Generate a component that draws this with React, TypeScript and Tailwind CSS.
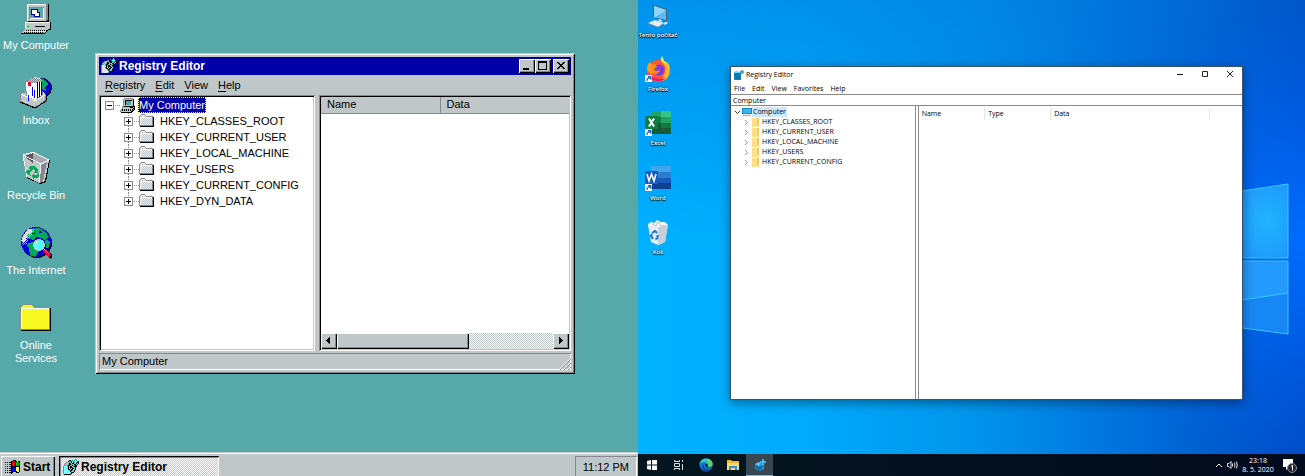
import type { ReactNode } from 'react'

const RAISED = 'bg-[#c0c7c8] shadow-[inset_1px_1px_#fff,inset_-1px_-1px_#000,inset_-2px_-2px_#87888f]'
const SUNKEN = 'bg-white p-0.5 shadow-[inset_1px_1px_#87888f,inset_-1px_-1px_#fff,inset_2px_2px_#000,inset_-2px_-2px_#c0c7c8]'
const CHECKER = 'bg-[repeating-conic-gradient(#fff_0_25%,#c0c7c8_0_50%)] bg-[length:2px_2px]'

const PALETTE: Record<string, string> = {
  k: '#000000', w: '#ffffff', g: '#c0c7c8', d: '#87888f', c: '#57ffff', t: '#00a8a8',
  y: '#ffff57', r: '#ff0000', b: '#0000ff', n: '#00c000', s: '#57a8a8',
}

// Small icons are kept as character maps, one letter per pixel
function Sprite({ rows }: { rows: string[] }) {
  return (
    <svg width="16" height="16" viewBox="0 0 16 16" shapeRendering="crispEdges" className="shrink-0" aria-hidden="true">
      {rows.flatMap((row, y) =>
        [...row].map((p, x) => (PALETTE[p] ? <rect key={`${x}-${y}`} x={x} y={y} width="1" height="1" fill={PALETTE[p]} /> : null))
      )}
    </svg>
  )
}

const REGEDIT = [
  '............t...',
  '......kk.t.tct..',
  '.....kddk.tccctk',
  '...ddgsck.ktcskk',
  '..dgcskkckkcskck',
  '.dcscskkssckkck.',
  '.dscskkscktskk..',
  'dcwcskckkcskkk..',
  'dwcwckskkkcsk...',
  'dcwcskckckkck...',
  'dwcwckkckkcsk...',
  'dcwcwcskksck....',
  'dwcwcwckscsk....',
  'dcwcwcwckkk.....',
  'dwcwcwcsk.......',
  '.kkkkkkk........',
]

const FOLDER = [
  '................',
  '..dddd..........',
  '.dwwwwd.........',
  'dgygygyddddddd..',
  'dwwwwwwwwwwwwdk.',
  'dwygygygygygydk.',
  'dwgygygygygygdk.',
  'dwygygygygygydk.',
  'dwgygygygygygdk.',
  'dwygygygygygydk.',
  'dwgygygygygygdk.',
  'dwygygygygygydk.',
  'ddddddddddddddk.',
  '.kkkkkkkkkkkkkk.',
  '................',
  '................',
]

const COMPUTER = [
  '................',
  '....ddddddddd...',
  '...dgggggggggk..',
  '...dgkkkkkkkgk..',
  '...dgksssssggk..',
  '...dgksssssggk..',
  '...dgksssssggk..',
  '...dgksssssggk..',
  '...dgggggggggk..',
  '..ddkkkkkkkkkkk.',
  '..dgggggggkkkgk.',
  '..dggggggggggkk.',
  '.dkgkgkgkgkgkdk.',
  'dgkgkgkgkgkgkk..',
  'dggggggggggkk...',
  '.kkkkkkkkkkk....',
]

const FLAG = [
  '................',
  '........kkk.....',
  '......kkrrkk.kk.',
  'k.k.kkkrrrknnnk.',
  '......krrrknnnk.',
  'r.r.rkkrrrknnnk.',
  '......krrkknnnk.',
  'r.k.rkkkkkkkkkk.',
  '......kbbkkyyyk.',
  'b.b.bkkbbbkyyyk.',
  '......kbbbkyyyk.',
  'b.k.bkkbbbkyyyk.',
  '......kbkkkkyyk.',
  'k.k.kkkk...kkk..',
  '......k.........',
  '................',
]

function Pixel32({ children }: { children: ReactNode }) {
  return (
    <svg width="32" height="32" viewBox="0 0 32 32" shapeRendering="crispEdges" aria-hidden="true">
      <defs>
        <pattern id="dither" width="2" height="2" patternUnits="userSpaceOnUse">
          <path d="M0 0h1v1H0zM1 1h1v1H1z" fill="#c0c7c8" />
        </pattern>
      </defs>
      {children}
    </svg>
  )
}

const MyComputerIcon = () => (
  <Pixel32>
    <path d="M8 1h19l2 2v16l-2 2H8z" fill="#000" />
    <path d="M7 2l2-1h19v17l-2 1H7z" fill="#87888f" />
    <path d="M7 2h19v17H7z" fill="#c0c7c8" />
    <path d="M7 2h19v1H7zM7 2h1v17H7z" fill="#fff" />
    <path d="M9 5h15v12H9z" fill="#87888f" />
    <path d="M10 6h14v11H10z" fill="#fff" />
    <path d="M10 6h13v10H10z" fill="#57a8a8" />
    <path d="M11 7h7v6h-7zM14 10h6v5h-6z" fill="#0000a8" />
    <path d="M12 8h5v4h-5zM15 11h4v3h-4z" fill="#fff" />
    <path d="M5 20h26v8H5z" fill="#000" />
    <path d="M5 20h25v7H5z" fill="#c0c7c8" />
    <path d="M5 20h25v1H5zM5 20h1v7H5z" fill="#fff" />
    <path d="M7 24h2v1H7z" fill="#00c000" />
    <path d="M15 24h10v1H15z" fill="#000" />
    <path d="M5 27h24l-4 5H1v-1z" fill="#000" />
    <path d="M5 27h23l-4 4H1z" fill="#c0c7c8" />
    <path d="M6 28.500h21M4 30.500h20" stroke="#000" strokeDasharray="1 1" />
    <path d="M5 29.500h21" stroke="#fff" strokeDasharray="1 1" />
  </Pixel32>
)

const InboxIcon = () => (
  <Pixel32>
    <circle cx="22" cy="11" r="10" fill="#000" />
    <circle cx="21" cy="11" r="10" fill="#0000d0" />
    <path d="M18 1l6 1 4 5-3 3 1 4-5-3-3-5z" fill="#00a857" />
    <path d="M6 5l8-5 6 1v22H7z" fill="#fff" />
    <path d="M7 4l7-4 8 3v3l-7 0-9-1z" fill="#87888f" />
    <path d="M7 4l7-4 8 3v3l-7 0-9-1z" fill="url(#dither)" />
    <path d="M17 5h1v17h-1zM19 5h1v16h-1zM21 5h1v16h-1z" fill="#000" />
    <path d="M18 5h1v17h-1zM20 5h1v16h-1z" fill="#fff" />
    <path d="M8 5h3v4H8z" fill="#e00020" />
    <path d="M12 10h1v9h-1zM14 13h1v8h-1z" fill="#0000ff" />
    <path d="M0 16l6-3v6l9 4 7-5v-4l4 3v8l-11 7L0 25z" fill="#87888f" />
    <path d="M1 17l5-2v5l9 4 8-6v-3l2 2v6l-10 7L1 24z" fill="#c0c7c8" />
    <path d="M1 17l14 7 10-6" stroke="#fff" fill="none" />
    <path d="M0 25l15 6 11-7v-6" stroke="#000" fill="none" />
    <path d="M8 18h1v6H8z" fill="#0000ff" />
  </Pixel32>
)

const RecycleIcon = () => (
  <Pixel32>
    <path d="M3 3l10-3 17 8-4 22-6 2-13-6z" fill="#000" />
    <path d="M3 3l10-3 16 8-4 21-6 2-12-6z" fill="#c0c7c8" />
    <path d="M4 4l9-3v10z" fill="#57585f" />
    <path d="M13 1l15 7-8 4-7-3z" fill="#a8acb0" />
    <path d="M3 3l18 9 8-4M3 3l10-3 16 8M3 3l4 22" stroke="#fff" fill="none" />
    <path d="M21 12l-2 18" stroke="#e8ecec" fill="none" />
    <path d="M27 10l-4 19-3 2 1-18z" fill="#87888f" />
    <path d="M10 14l4 0 3 3 1-1v5h-5l2-2-2-2-2 2-2-2zM7 18l4 0-1 4 1 2-3-1-2-3zM12 24l2-3v2h3l2-3 0 4-2 2h-3v2z" fill="#00a857" />
  </Pixel32>
)

const InternetIcon = () => (
  <Pixel32>
    <circle cx="17" cy="16" r="15" fill="#000" />
    <circle cx="16" cy="15" r="15" fill="#0000d8" />
    <path d="M5 6l6-4 8-1 7 4 3 5-4 3-4-2-5-1-3 3-5-2-4 1z" fill="#00a857" />
    <path d="M8 16l5-1 4 3 2 6-4 6-5-2-1-7-3-3z" fill="#00a857" />
    <path d="M25 13l5 1-1 6-3 1z" fill="#00a857" />
    <path d="M3 9l5-7 5 0-2 4-4 2-1 6-3 2-2-2z" fill="#fff" />
    <path d="M3 9l5-7 7-1-2 6-5 5-1 5-4 1-2-4z" fill="url(#dither)" />
    <path d="M12 6h4v1h-4zM19 4h3v2h-3z" fill="#0000d8" />
    <circle cx="19" cy="18" r="6" fill="#c0c7c8" />
    <circle cx="19" cy="18" r="5" fill="#57ffff" />
    <circle cx="19" cy="18" r="5" fill="url(#dither)" />
    <path d="M16 15h2v1h-2zM15 17h1v3h-1z" fill="#fff" />
    <path d="M23 22l2-1 7 7v3l-2 1-7-7z" fill="#000" />
    <path d="M24 23l6 6" stroke="#e00040" strokeWidth="3" />
    <path d="M24 22l5 5" stroke="#ffa8c0" />
  </Pixel32>
)

const OnlineIcon = () => (
  <Pixel32>
    <path d="M0 6l3-4h9l3 4h15v22H0z" fill="#87888f" />
    <path d="M30 6h1v23H1v-1h29z" fill="#000" />
    <path d="M1 6l2-3h9l3 4h14v20H1z" fill="#ffff00" />
    <path d="M3 3h9l2 3H1zM2 7h27v20H2z" fill="url(#dither)" fillOpacity="0.15" />
    <path d="M1 6h28v1H1zM1 6h1v21H1z" fill="#fff" />
  </Pixel32>
)

const CLASSIC_ICONS = [
  { label: 'My Computer', Icon: MyComputerIcon },
  { label: 'Inbox', Icon: InboxIcon },
  { label: 'Recycle Bin', Icon: RecycleIcon },
  { label: 'The Internet', Icon: InternetIcon },
  { label: 'Online Services', Icon: OnlineIcon },
]

const CLASSIC_KEYS = ['HKEY_CLASSES_ROOT', 'HKEY_CURRENT_USER', 'HKEY_LOCAL_MACHINE', 'HKEY_USERS', 'HKEY_CURRENT_CONFIG', 'HKEY_DYN_DATA']

function Expander({ open, last }: { open?: boolean; last?: boolean }) {
  return (
    <svg width="15" height="16" viewBox="0 0 15 16" shapeRendering="crispEdges" className="shrink-0" aria-hidden="true">
      <path d="M10 8.500h5" stroke="#87888f" strokeDasharray="1 1" />
      {!open && <path d="M4.500 0v4" stroke="#87888f" strokeDasharray="1 1" />}
      {!open && !last && <path d="M4.500 13v3" stroke="#87888f" strokeDasharray="1 1" />}
      <rect x="0.500" y="4.500" width="8" height="8" fill="#fff" stroke="#87888f" />
      <path d="M2 8h5v1H2z" />
      {!open && <path d="M4 6h1v5H4z" />}
    </svg>
  )
}

function CaptionButton({ label, d }: { label: string; d: string }) {
  return (
    <button aria-label={label} className={`h-3.5 w-4 ${RAISED}`}>
      <svg width="16" height="14" viewBox="0 0 16 14" shapeRendering="crispEdges"><path d={d} fillRule="evenodd" /></svg>
    </button>
  )
}

function ClassicWindow() {
  return (
    <div className="mt-[53px] mr-[63px] mb-[78px] ml-[23px] flex min-w-0 flex-1 flex-col bg-[#c0c7c8] p-1 shadow-[inset_1px_1px_#c0c7c8,inset_-1px_-1px_#000,inset_2px_2px_#fff,inset_-2px_-2px_#87888f]">
      <div className="flex h-[18px] items-center bg-[#0000a8] px-0.5 text-white">
        <Sprite rows={REGEDIT} />
        <h1 className="ml-0.5 flex-1 text-[12px] leading-4 font-bold">Registry Editor</h1>
        <CaptionButton label="Minimize" d="M4 9h6v2H4z" />
        <CaptionButton label="Maximize" d="M3 2h9v9H3zM4 4h7v6H4z" />
        <div className="ml-0.5 flex">
          <CaptionButton label="Close" d="M4 3h2v1h1v1h2V4h1V3h2v1h-1v1h-1v1H9v1h1v1h1v1h1v1h-2V9H9V8H7v1H6v1H4V9h1V8h1V7h1V6H6V5H5V4H4z" />
        </div>
      </div>
      <nav className="flex h-5 items-center gap-2.5 px-1.5">
        {['Registry', 'Edit', 'View', 'Help'].map((m) => (
          <button key={m}><u className="underline-offset-2">{m[0]}</u>{m.slice(1)}</button>
        ))}
      </nav>
      <div className="grid flex-1 grid-cols-[216fr_252fr] gap-1">
        <ul className={SUNKEN}>
          <li className="flex h-4 items-center pl-1">
            <Expander open />
            <Sprite rows={COMPUTER} />
            <button className="ml-0.5 h-4 bg-[#0000a8] px-px text-white outline-1 -outline-offset-1 outline-dotted outline-[#ffff57]">My Computer</button>
          </li>
          {CLASSIC_KEYS.map((key, i) => (
            <li key={key} className="flex h-4 items-center pl-[23px]">
              <Expander last={i === CLASSIC_KEYS.length - 1} />
              <Sprite rows={FOLDER} />
              <button className="ml-[5px]">{key}</button>
            </li>
          ))}
        </ul>
        <div className={`flex flex-col ${SUNKEN}`}>
          <table className="w-full table-fixed border-collapse bg-[#c0c7c8] text-left">
            <thead>
              <tr className="h-4 border-b border-[#87888f]">
                <th className="w-[48%] border-r border-[#87888f] pl-1.5 font-normal">Name</th>
                <th className="border-l border-white pl-1.5 font-normal">Data</th>
              </tr>
            </thead>
          </table>
          <div className="flex-1" />
          <div className={`flex h-4 ${CHECKER}`}>
            <button aria-label="Scroll left" className={`w-4 ${RAISED}`}>
              <svg width="16" height="16" viewBox="0 0 16 16" shapeRendering="crispEdges"><path d="M8 4h1v7H8V10H7V9H6V8H5V7h1V6h1V5h1z" /></svg>
            </button>
            <div className="flex flex-1"><div className={`w-[61%] ${RAISED}`} /></div>
            <button aria-label="Scroll right" className={`w-4 ${RAISED}`}>
              <svg width="16" height="16" viewBox="0 0 16 16" shapeRendering="crispEdges"><path d="M6 4h1v1h1v1h1v1h1v1H9v1H8v1H7v1H6z" /></svg>
            </button>
          </div>
        </div>
      </div>
      <footer className="mt-0.5 flex h-[17px] items-center justify-between pl-[3px] shadow-[inset_1px_1px_#87888f,inset_-1px_-1px_#fff]">
        <span>My Computer</span>
        <svg width="13" height="13" viewBox="0 0 13 13" className="mt-1" aria-hidden="true">
          <path d="M1 13L13 1M5 13l8-8M9 13l4-4" stroke="#fff" />
          <path d="M2 13L13 2M6 13l7-7M10 13l3-3" stroke="#87888f" />
        </svg>
      </footer>
    </div>
  )
}

function ClassicDesktop() {
  return (
    <section className="flex min-w-0 flex-col bg-[#57a8a8] font-['Liberation_Sans',sans-serif] text-[11px] leading-[13px] text-black">
      <div className="flex flex-1">
        <ul className="w-[72px] shrink-0 pt-0.5">
          {CLASSIC_ICONS.map(({ label, Icon }) => (
            <li key={label} className="flex h-[75px] justify-center text-white">
              <button className="flex w-[72px] flex-col items-center gap-[5px]">
                <Icon />
                <span className={label === 'Online Services' ? 'w-12' : 'whitespace-nowrap'}>{label}</span>
              </button>
            </li>
          ))}
        </ul>
        <ClassicWindow />
      </div>
      <footer className="flex h-6 overflow-hidden bg-[#c0c7c8] px-px pt-1 shadow-[inset_0_1px_#c0c7c8,inset_0_2px_#fff]">
        <button className={`flex h-[22px] w-[54px] items-center gap-0.5 pl-1 text-[12px] font-bold ${RAISED}`}>
          <Sprite rows={FLAG} />Start
        </button>
        <button className={`ml-1 flex h-[22px] w-40 items-center gap-0.5 pl-1 text-[12px] font-bold shadow-[inset_1px_1px_#000,inset_-1px_-1px_#fff,inset_2px_2px_#87888f] ${CHECKER}`}>
          <Sprite rows={REGEDIT} />Registry Editor
        </button>
        <div className="ml-auto flex h-[22px] items-center px-2 shadow-[inset_1px_1px_#87888f,inset_-1px_-1px_#fff]">11:12 PM</div>
      </footer>
    </section>
  )
}

function Shortcut() {
  return (
    <g>
      <path d="M1 19h7v7H1z" fill="#fff" />
      <path d="M3 25c0-2 0-3 2-3M4 20.500h3v3z" fill="#1565c0" stroke="#1565c0" />
    </g>
  )
}

const PcIcon = () => (
  <>
    <path d="M9 3l14 4v12L9 15z" fill="#53616e" />
    <path d="M10 4l12 4v10l-12-3z" fill="#57bdf6" />
    <path d="M10 4l12 4-12 8z" fill="#8ed6fb" />
    <path d="M15 17l3 1v2l-4-1z" fill="#cfd8dc" />
    <path d="M4 21l7-3 9 3-6 4z" fill="#e6edf2" />
    <path d="M4 21l10 4 6-4v1l-6 4-10-4z" fill="#73899a" />
    <path d="M19 21l4-1 1 1-3 2z" fill="#e6edf2" />
  </>
)

const FirefoxIcon = () => (
  <>
    <circle cx="14" cy="15" r="11" fill="#ff5537" />
    <path d="M3 14c0-5 2-7 3-8l2 3c3-1 5 0 6 1l-4 5-3 3z" fill="#ff9a1e" />
    <path d="M18 0c-3 4 0 6 2 8 3 4 2 9-1 12l4 1c4-6 4-14-3-16 0-2-1-3-2-5z" fill="#ffdc3e" />
    <path d="M21 6c5 4 6 10 3 15-2 3-5 4-7 4 4-5 6-12 4-19z" fill="#ffb32c" />
    <path d="M4 17c2 8 12 11 18 5-6 2-14 1-18-5z" fill="#f5156c" />
    <circle cx="15" cy="14" r="5.500" fill="#7a3be0" />
    <path d="M6 11l8-1c-2 1-3 2-4 4 2 1 4 1 6 0-1 4-5 5-8 3z" fill="#ff8a1c" />
    <Shortcut />
  </>
)

const ExcelIcon = () => (
  <>
    <path d="M7 1h10v6H7z" fill="#21a366" /><path d="M17 1h10v6H17z" fill="#33c481" />
    <path d="M7 7h10v6H7z" fill="#107c41" /><path d="M17 7h10v6H17z" fill="#21a366" />
    <path d="M7 13h20v11H7z" fill="#185c37" /><path d="M17 13h10v5H17z" fill="#107c41" />
    <rect x="1" y="6" width="13" height="13" rx="1" fill="#107c41" />
    <path d="M5 8.500l5 8M10 8.500l-5 8" stroke="#fff" strokeWidth="2" />
    <Shortcut />
  </>
)

const WordIcon = () => (
  <>
    <path d="M7 1h20v6H7z" fill="#41a5ee" /><path d="M7 7h20v6H7z" fill="#2b7cd3" />
    <path d="M7 13h20v5H7z" fill="#185abd" /><path d="M7 18h20v6H7z" fill="#103f91" />
    <rect x="1" y="6" width="13" height="13" rx="1" fill="#185abd" />
    <path d="M3 9l2 7 2.500-7 2.500 7 2-7" stroke="#fff" strokeWidth="1.500" fill="none" />
    <Shortcut />
  </>
)

const BinIcon = () => (
  <>
    <path d="M4 5l3-2 3 1 3-3 4 2 4 0 3 3-1 3H5z" fill="#f6f8fa" />
    <path d="M8 5l4 2 2-4 3 4 4-1" stroke="#b4bfc8" fill="none" />
    <path d="M4 6l10 2 10-2-3 17-7 3-7-3z" fill="#e6ebef" />
    <path d="M14 8l10-2-3 17-7 3z" fill="#c8d0d7" />
    <path d="M8 14l3-2 2 2M13.500 16v3l-2 1.500M9 20l-2-3 1-2" stroke="#1673d1" strokeWidth="2" fill="none" />
  </>
)

const MODERN_ICONS = [
  { label: 'Tento počítač', Icon: PcIcon },
  { label: 'Firefox', Icon: FirefoxIcon },
  { label: 'Excel', Icon: ExcelIcon },
  { label: 'Word', Icon: WordIcon },
  { label: 'Koš', Icon: BinIcon },
]

const MODERN_KEYS = CLASSIC_KEYS.slice(0, 5)

function CubeIcon() {
  return (
    <svg width="10" height="10" viewBox="0 0 10 10" className="shrink-0" aria-hidden="true">
      <path d="M0 2l7 0v8H0z" fill="#1686c4" />
      <path d="M0 2l2-1 5 1v1H0z" fill="#6fd0f5" />
      <path d="M0 5h7M0 7.500h7M2.300 3v7M4.700 4v6" stroke="#0a5d92" strokeWidth="0.500" />
      <path d="M7 0h2v1h1v2H9v1H7V3H6V1h1z" fill="#35b2e8" />
    </svg>
  )
}

function TiltedCubeIcon() {
  return (
    <svg width="12" height="12" viewBox="0 0 12 12" aria-hidden="true">
      <path d="M1 5l4-2 2 1 3 1v5l-4 2-5-2z" fill="#1c93da" />
      <path d="M1 5l4-2 2 2-2 2z" fill="#58c4f3" />
      <path d="M5 7v5M1 7.500l4 2 4-2M3 6v5M7 6v5" stroke="#0b3f66" strokeWidth="0.500" fill="none" />
      <path d="M8 0h2v2h2v2h-2v2H8V4H6V2h2z" fill="#3db8f0" />
    </svg>
  )
}

function ModernWindow() {
  return (
    <div className="mt-[66px] mr-[62px] mb-[54px] ml-[52px] flex min-w-0 flex-1 flex-col border border-[#35536f] bg-white text-black shadow-[0_3px_10px_rgba(0,0,0,0.4)]">
      <div className="flex h-4 items-center pl-[3px]">
        <CubeIcon />
        <h2 className="ml-0.5 flex-1">Registry Editor</h2>
        {[
          ['Minimize', 'M10 7.500h6'],
          ['Maximize', 'M10.500 4.500h5v5h-5z'],
          ['Close', 'M10 4l6 6M16 4l-6 6'],
        ].map(([label, d]) => (
          <button key={label} aria-label={label} className="w-[25px]">
            <svg width="25" height="16" viewBox="0 0 25 16" fill="none" stroke="#222"><path d={d} /></svg>
          </button>
        ))}
      </div>
      <nav className="flex h-[11px] items-center gap-[7px] pl-[3px]">
        {['File', 'Edit', 'View', 'Favorites', 'Help'].map((m) => <button key={m}>{m}</button>)}
      </nav>
      <input aria-label="Address" defaultValue="Computer" className="h-3 w-full border-y border-[#8a8a8a] pl-0.5 outline-none" />
      <div className="grid flex-1 grid-cols-[185fr_327fr]">
        <ul className="border-r border-[#8a8a8a] pt-px">
          <li className="flex h-2.5 items-center pl-1">
            <svg width="7" height="10" viewBox="0 0 7 10" fill="none" stroke="#333"><path d="M0 4l2.500 2.500L5 4" /></svg>
            <svg width="10" height="10" viewBox="0 0 10 10" aria-hidden="true">
              <path d="M0 1h10v6H0z" fill="#1583c7" /><path d="M1 2h8v4H1z" fill="#38b6f2" /><path d="M1 8h8v1H1z" fill="#8eb1c7" />
            </svg>
            <button className="h-2.5 bg-[#cce8ff] px-px">Computer</button>
          </li>
          {MODERN_KEYS.map((key) => (
            <li key={key} className="flex h-2.5 items-center pl-3">
              <svg width="9" height="10" viewBox="0 0 9 10" fill="none" stroke="#999"><path d="M2 3l2.500 2.500L2 8" /></svg>
              <svg width="8" height="10" viewBox="0 0 8 10" aria-hidden="true">
                <path d="M0 1h7v9H0z" fill="#ffe08a" /><path d="M5 1h2v7H5z" fill="#f4c955" />
              </svg>
              <button className="ml-0.5">{key}</button>
            </li>
          ))}
        </ul>
        <div className="ml-0.5 border-l border-[#8a8a8a] pt-0.5 pr-8">
          <table className="w-full table-fixed text-left">
            <thead>
              <tr className="h-3">
                <th className="w-[66px] border-r border-[#e5e5e5] pl-[3px] font-normal">Name</th>
                <th className="w-[66px] border-r border-[#e5e5e5] pl-[3px] font-normal">Type</th>
                <th className="border-r border-[#e5e5e5] pl-[3px] font-normal">Data</th>
              </tr>
            </thead>
          </table>
        </div>
      </div>
    </div>
  )
}

function TaskButton({ label, active, children }: { label: string; active?: boolean; children: ReactNode }) {
  return (
    <button aria-label={label} className={`flex w-[27px] items-center justify-center ${active ? 'border-b border-[#76b9ed] bg-[#38474f]' : ''}`}>
      {children}
    </button>
  )
}

function ModernDesktop() {
  return (
    <section className="relative flex min-w-0 flex-col bg-[radial-gradient(ellipse_30%_50%_at_100%_50%,#006cff_0%,#006cff00_100%),linear-gradient(172deg,#0074d880_0%,#0090e000_45%),linear-gradient(90deg,#00b2ff_0%,#00abfb_25%,#0095ec_50%,#006fdb_75%,#0048c0_100%)] font-['Open_Sans',sans-serif] text-[7px] leading-[10px]">
      <svg className="absolute top-[180px] right-0" width="70" height="160" viewBox="0 0 70 160" aria-hidden="true">
        <defs>
          <radialGradient id="pane" cx="0.600" cy="0.500" r="0.700">
            <stop offset="0" stopColor="#20b4ff" />
            <stop offset="1" stopColor="#1f94fb" />
          </radialGradient>
        </defs>
        <path d="M0 12L53 4v74H0z" fill="url(#pane)" />
        <path d="M0 81h53v73L0 147z" fill="#2299fb" />
        <path d="M0 121l53-8v41L0 147z" fill="#1787f6" />
        <path d="M0 12L53 4v74H0M0 81h53v73L0 147M0 121l53-8" fill="none" stroke="#35c8ff" />
      </svg>
      <div className="relative flex flex-1">
        <ul className="grid h-[273px] w-10 shrink-0 grid-rows-5 pt-0.5">
          {MODERN_ICONS.map(({ label, Icon }) => (
            <li key={label}>
              <button className="flex w-10 flex-col items-center text-[6px] font-semibold whitespace-nowrap text-white [text-shadow:0_1px_1px_#000,0_0_2px_#000]">
                <svg width="28" height="28" viewBox="0 0 28 28" aria-hidden="true"><Icon /></svg>
                <span>{label}</span>
              </button>
            </li>
          ))}
        </ul>
        <ModernWindow />
      </div>
      <footer className="relative flex h-[22px] bg-linear-to-r from-[#04161f] to-[#020a1d] text-white">
        <TaskButton label="Start">
          <svg width="10" height="10" viewBox="0 0 10 10" fill="#fff"><path d="M0 1l4-1v4.500H0zM5 0l5-1v5.500H5zM0 5.500h4V10L0 9zM5 5.500h5V11l-5-1z" /></svg>
        </TaskButton>
        <TaskButton label="Task View">
          <svg width="10" height="10" viewBox="0 0 10 10" fill="none" stroke="#d8dde0"><path d="M0.500 0v1.500h5V0M0.500 3.500h5v3h-5zM0.500 10V8.500h5V10M8.500 0v2M8.500 4v6" /></svg>
        </TaskButton>
        <TaskButton label="Edge">
          <svg width="14" height="14" viewBox="0 0 14 14">
            <circle cx="7" cy="7" r="6.500" fill="#1478d4" />
            <path d="M0.500 7C1 2 4 0.500 7 0.500c4 0 7 3 6.500 6C13 9 10 9.500 8.500 8.500 10 6 7 4 5 4 3 4 1 5 0.500 7z" fill="#35c7c0" />
            <path d="M7 0.500c4 0 7 3 6.500 6C13 9 10 9.500 8.500 8.500c2-3 0-6-1.500-8z" fill="#58d56a" />
            <path d="M5 6c-1 4 3 6 7 5-3 4-9 2-9-2 0-1 1-2 2-3z" fill="#0c4c9c" />
            <path d="M6.500 6.500c1-1 3 0 2 2 1 1 3 1 4 0-1 2-6 2-6-2z" fill="#04161f" />
          </svg>
        </TaskButton>
        <TaskButton label="File Explorer">
          <svg width="12" height="11" viewBox="0 0 12 11"><path d="M0 0h4l1 1h7v9H0z" fill="#f5b82e" /><path d="M0 3h12v7H0z" fill="#ffdb70" /><path d="M2 6h8v4H8V8H4v2H2z" fill="#2f8ee0" /></svg>
        </TaskButton>
        <TaskButton label="Registry Editor" active><TiltedCubeIcon /></TaskButton>
        <div className="ml-auto flex items-center pr-2">
          <button aria-label="Show hidden icons">
            <svg width="8" height="8" viewBox="0 0 8 8" fill="none" stroke="#fff"><path d="M1 6l3-3 3 3" /></svg>
          </button>
          <button aria-label="Volume" className="ml-1">
            <svg width="11" height="10" viewBox="0 0 11 10" fill="none" stroke="#dfe3e6"><path d="M0.500 3.500h1.500l2-2v7l-2-2H0.500zM5.500 3.500v3M7.500 2.500q1 2.500 0 5M9.500 1.500q1.500 3.500 0 7" /></svg>
          </button>
          <div className="mx-1.5 flex w-7 flex-col items-center leading-[9px] whitespace-nowrap">
            <span>23:18</span>
            <span>8. 5. 2020</span>
          </div>
          <button aria-label="Notifications" className="ml-1">
            <svg width="15" height="15" viewBox="0 0 15 15">
              <path d="M1 1h10v8H7l-3 3V9H1z" fill="#fff" />
              <circle cx="10" cy="10" r="4.500" fill="#20262c" stroke="#8a9095" />
              <path d="M9 8.500l1.500-1V12.500" stroke="#fff" fill="none" />
            </svg>
          </button>
        </div>
      </footer>
    </section>
  )
}

export default function App() {
  return (
    <main className="grid min-h-screen grid-cols-[638fr_667fr]">
      <ClassicDesktop />
      <ModernDesktop />
    </main>
  )
}
